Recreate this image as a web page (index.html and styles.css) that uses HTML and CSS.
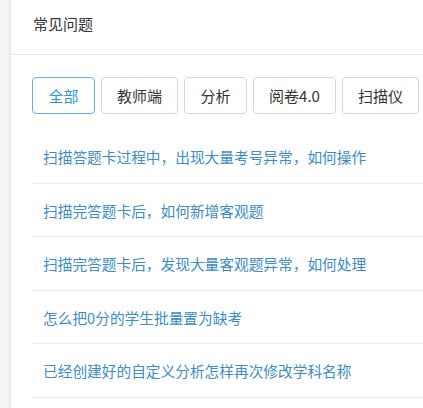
FILE: index.html
```html
<!DOCTYPE html>
<html>
<head>
  <meta charset="utf-8">
  <title>常见问题</title>
  <link rel="stylesheet" href="styles.css">
</head>
<body>

<div class="panel">
  <div class="panel-head">常见问题</div>

  <div class="tabs">
    <button class="tab active">全部</button>
    <button class="tab tab-wide">教师端</button>
    <button class="tab">分析</button>
    <button class="tab tab-wider">阅卷4.0</button>
    <button class="tab tab-wide">扫描仪</button>
  </div>

  <!-- 问题列表 -->
  <ul class="faq">
    <li><a href="#">扫描答题卡过程中，出现大量考号异常，如何操作</a></li>
    <li><a href="#">扫描完答题卡后，如何新增客观题</a></li>
    <li><a href="#">扫描完答题卡后，发现大量客观题异常，如何处理</a></li>
    <li><a href="#">怎么把0分的学生批量置为缺考</a></li>
    <li><a href="#">已经创建好的自定义分析怎样再次修改学科名称</a></li>
  </ul>
</div>

</body>
</html>
```

FILE: styles.css
```css
body { margin: 0; background: #f4f4f4; font-family: "Noto Sans CJK SC", "Noto Sans", sans-serif; overflow: hidden; }
.panel { margin-left: 11px; background: #fff; min-height: 408px; box-shadow: -1px 0 3px rgba(0,0,0,0.08); }
.panel-head { height: 54px; line-height: 48px; padding-left: 22px; font-size: 15px; color: #333; border-bottom: 1px solid #e4e4e4; }
.tabs { display: flex; gap: 6px; padding: 22px 0 0 21px; white-space: nowrap; }
.tab { flex: none; width: 63px; height: 37px; padding: 0; font-family: inherit; font-size: 15px; color: #333; background: #fff; border: 1px solid #d6d6d6; border-radius: 4px; }
.tab-wide { width: 77px; }
.tab-wider { width: 83px; }
.tab.active { color: #2d93d3; border-color: #68b1dd; }
.faq { list-style: none; margin: 16px 0 0 21px; padding: 0; }
.faq li { height: 52.5px; line-height: 52px; border-bottom: 1px solid #ececec; padding-left: 11px; }
.faq a { color: #3b8cc8; font-size: 14.7px; text-decoration: none; }
```
